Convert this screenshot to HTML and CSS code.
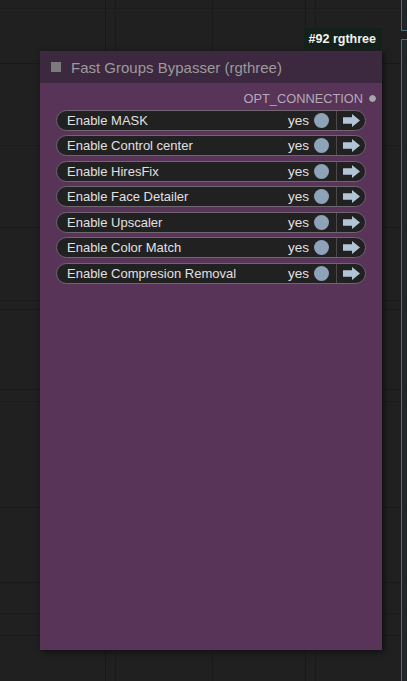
FILE: index.html
```html
<!DOCTYPE html>
<html>
<head>
<meta charset="utf-8">
<link rel="stylesheet" href="styles.css">
</head>
<body>
<div class="canvas">
  <div class="side-node side-top"></div>
  <div class="side-node side-main"></div>

  <div class="node">
    <div class="badge">#92 rgthree</div>
    <div class="title">
      <span class="title-box"></span>
      <span class="title-text">Fast Groups Bypasser (rgthree)</span>
    </div>
    <div class="body">
      <div class="output">
        <span class="output-label">OPT_CONNECTION</span>
        <span class="output-dot"></span>
      </div>
      <div class="rows">
        <div class="row"><span class="label">Enable MASK</span><span class="yes">yes</span><span class="toggle"></span><span class="nav"><svg class="arrow" viewBox="0 0 17 13"><path d="M0 3.2h9V0l8 6.5-8 6.5V9.8H0z"/></svg></span></div>
        <div class="row"><span class="label">Enable Control center</span><span class="yes">yes</span><span class="toggle"></span><span class="nav"><svg class="arrow" viewBox="0 0 17 13"><path d="M0 3.2h9V0l8 6.5-8 6.5V9.8H0z"/></svg></span></div>
        <div class="row"><span class="label">Enable HiresFix</span><span class="yes">yes</span><span class="toggle"></span><span class="nav"><svg class="arrow" viewBox="0 0 17 13"><path d="M0 3.2h9V0l8 6.5-8 6.5V9.8H0z"/></svg></span></div>
        <div class="row"><span class="label">Enable Face Detailer</span><span class="yes">yes</span><span class="toggle"></span><span class="nav"><svg class="arrow" viewBox="0 0 17 13"><path d="M0 3.2h9V0l8 6.5-8 6.5V9.8H0z"/></svg></span></div>
        <div class="row"><span class="label">Enable Upscaler</span><span class="yes">yes</span><span class="toggle"></span><span class="nav"><svg class="arrow" viewBox="0 0 17 13"><path d="M0 3.2h9V0l8 6.5-8 6.5V9.8H0z"/></svg></span></div>
        <div class="row"><span class="label">Enable Color Match</span><span class="yes">yes</span><span class="toggle"></span><span class="nav"><svg class="arrow" viewBox="0 0 17 13"><path d="M0 3.2h9V0l8 6.5-8 6.5V9.8H0z"/></svg></span></div>
        <div class="row"><span class="label">Enable Compresion Removal</span><span class="yes">yes</span><span class="toggle"></span><span class="nav"><svg class="arrow" viewBox="0 0 17 13"><path d="M0 3.2h9V0l8 6.5-8 6.5V9.8H0z"/></svg></span></div>
      </div>
    </div>
  </div>
</div>
</body>
</html>
```

FILE: styles.css
```css
html, body {
  margin: 0;
  padding: 0;
  width: 407px;
  height: 681px;
  overflow: hidden;
  background: #1f1f1f;
  font-family: "Liberation Sans", Arial, sans-serif;
}

.canvas {
  position: relative;
  width: 407px;
  height: 681px;
  background-color: #202020;
  background-image:
    linear-gradient(to right, transparent 105px, #181818 105px, #181818 106px, transparent 106px),
    linear-gradient(to right, transparent 115px, #1b1b1b 115px, #1b1b1b 116px, transparent 116px),
    linear-gradient(to right, transparent 212px, #191919 212px, #191919 213px, transparent 213px),
    linear-gradient(to right, transparent 305px, #191919 305px, #191919 306px, transparent 306px),
    linear-gradient(to right, transparent 315px, #1b1b1b 315px, #1b1b1b 316px, transparent 316px),
    linear-gradient(to bottom, transparent 8px, #1b1b1b 8px, #1b1b1b 9px, transparent 9px),
    linear-gradient(to bottom, transparent 63px, #191919 63px, #191919 64px, transparent 64px),
    linear-gradient(to bottom, transparent 145px, #1b1b1b 145px, #1b1b1b 146px, transparent 146px),
    linear-gradient(to bottom, transparent 227px, #191919 227px, #191919 228px, transparent 228px),
    linear-gradient(to bottom, transparent 300px, #1b1b1b 300px, #1b1b1b 301px, transparent 301px),
    linear-gradient(to bottom, transparent 309px, #191919 309px, #191919 310px, transparent 310px),
    linear-gradient(to bottom, transparent 389px, #191919 389px, #191919 390px, transparent 390px),
    linear-gradient(to bottom, transparent 401px, #1b1b1b 401px, #1b1b1b 402px, transparent 402px),
    linear-gradient(to bottom, transparent 507px, #1a1a1a 507px, #1a1a1a 508px, transparent 508px),
    linear-gradient(to bottom, transparent 582px, #191919 582px, #191919 583px, transparent 583px),
    linear-gradient(to bottom, transparent 613px, #1b1b1b 613px, #1b1b1b 614px, transparent 614px),
    linear-gradient(to bottom, transparent 635px, #1a1a1a 635px, #1a1a1a 636px, transparent 636px);
}

.side-node {
  position: absolute;
  left: 401px;
  width: 20px;
  background: #1f272b;
  border-left: 1px solid #4d6f7c;
}
.side-top {
  top: -5px;
  height: 35px;
  border-bottom: 1px solid #4d6f7c;
}
.side-main {
  top: 39px;
  height: 660px;
  border-top: 1px solid #4d6f7c;
}

.node {
  position: absolute;
  left: 40px;
  top: 51px;
  width: 342px;
  height: 599px;
  display: flex;
  flex-direction: column;
  background: #573458;
  box-shadow: 2px 2px 6px rgba(0, 0, 0, 0.55);
}

.badge {
  position: absolute;
  right: 0;
  top: -23px;
  height: 22px;
  padding: 0 6px 0 5px;
  display: flex;
  align-items: center;
  background: #14201a;
  color: #f2f2f2;
  font-size: 12.5px;
  font-weight: bold;
  border-radius: 3px 3px 0 0;
}

.title {
  height: 32px;
  flex: none;
  display: flex;
  align-items: center;
  gap: 10px;
  padding-left: 11px;
  background: #3c283f;
}
.title-box {
  width: 10px;
  height: 10px;
  background: #7b7b7b;
}
.title-text {
  color: #9c9a9d;
  font-size: 15px;
}

.body {
  flex: 1;
  padding: 5px 0 0 0;
  display: flex;
  flex-direction: column;
}

.output {
  height: 20px;
  display: flex;
  align-items: center;
  justify-content: flex-end;
  padding-right: 5px;
  gap: 5px;
}
.output-label {
  color: #b6a9b7;
  font-size: 12.8px;
}
.output-dot {
  width: 7px;
  height: 7px;
  border-radius: 50%;
  background: #aaa4ad;
  border: 1px solid #3a2a3a;
}

.rows {
  margin: 1.5px 16px 0 16px;
  display: flex;
  flex-direction: column;
  gap: 4.5px;
}

.row {
  height: 19px;
  display: flex;
  align-items: center;
  background: #222122;
  border: 1px solid #706570;
  border-radius: 11px;
  padding-left: 10px;
}
.label {
  flex: 1;
  color: #e0e0e0;
  font-size: 13px;
  white-space: nowrap;
}
.yes {
  color: #e0e0e0;
  font-size: 13.5px;
  margin-right: 5px;
}
.toggle {
  width: 15px;
  height: 15px;
  border-radius: 50%;
  background: #8ea3b8;
  margin-right: 7px;
}
.nav {
  width: 28px;
  height: 19px;
  border-left: 1px solid #4c4a4c;
  display: flex;
  align-items: center;
  justify-content: center;
}
.arrow {
  width: 17px;
  height: 13px;
  fill: #b2c5d7;
  margin-left: 1px;
}
```
